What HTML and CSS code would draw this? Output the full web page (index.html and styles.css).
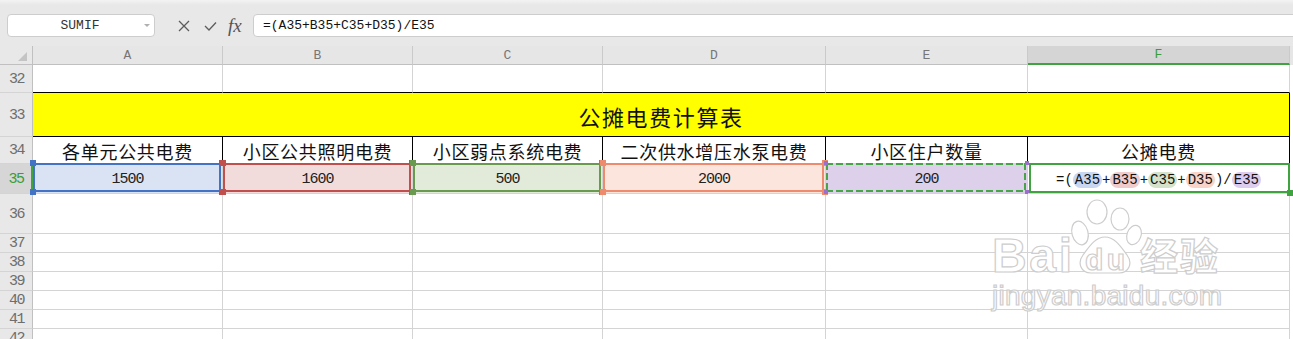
FILE: index.html
```html
<!DOCTYPE html>
<html lang="zh-CN">

<head>
  <meta charset="UTF-8">
  <meta name="viewport" content="width=device-width, initial-scale=1.0">
  <title>公摊电费计算表</title>
  <link rel="stylesheet" href="styles.css">
</head>

<body>
  <div id="app">
    <div class="top"></div>
    <div class="bar">
      <div class="name-box"><span class="name">SUMIF</span><span class="drop"></span></div>
      <div class="tools">
        <svg width="12" height="12" viewBox="0 0 12 12">
          <path d="M1 1L11 11M11 1L1 11" stroke="#5c5c5c" stroke-width="1.3" fill="none" />
        </svg>
        <svg class="ok" width="13" height="10" viewBox="0 0 13 10">
          <path d="M1 5L5 9L12 1.5" stroke="#5c5c5c" stroke-width="1.3" fill="none" />
        </svg>
        <span class="fx">fx</span>
      </div>
      <div class="input">=(A35+B35+C35+D35)/E35</div>
    </div>
    <div class="gap"></div>

    <div class="sheet">
      <div class="row head">
        <div class="rh corner"><span class="tri"></span></div>
        <div class="c ca">A</div>
        <div class="c cb">B</div>
        <div class="c cc">C</div>
        <div class="c cd">D</div>
        <div class="c ce">E</div>
        <div class="c cf on">F</div>
      </div>

      <div class="row r32">
        <div class="rh">32</div>
        <div class="c ca"></div>
        <div class="c cb"></div>
        <div class="c cc"></div>
        <div class="c cd"></div>
        <div class="c ce"></div>
        <div class="c cf"></div>
      </div>

      <div class="row r33">
        <div class="rh">33</div>
        <div class="c title">公摊电费计算表</div>
      </div>

      <div class="row r34">
        <div class="rh">34</div>
        <div class="c ca">各单元公共电费</div>
        <div class="c cb">小区公共照明电费</div>
        <div class="c cc">小区弱点系统电费</div>
        <div class="c cd">二次供水增压水泵电费</div>
        <div class="c ce">小区住户数量</div>
        <div class="c cf">公摊电费</div>
      </div>

      <div class="row r35">
        <div class="rh sel">35</div>
        <div class="c ca v blue">1500</div>
        <div class="c cb v red">1600</div>
        <div class="c cc v green">500</div>
        <div class="c cd v orange">2000</div>
        <div class="c ce v purple">200</div>
        <div class="c cf active">
          <span class="fm">=(<span class="p pa">A35</span>+<span class="p pb">B35</span>+<span class="p pc">C35</span>+<span class="p pd">D35</span>)/<span class="p pe">E35</span></span>
        </div>
      </div>

      <div class="row r36">
        <div class="rh">36</div>
        <div class="c ca"></div>
        <div class="c cb"></div>
        <div class="c cc"></div>
        <div class="c cd"></div>
        <div class="c ce"></div>
        <div class="c cf"></div>
      </div>
      <div class="row small">
        <div class="rh">37</div>
        <div class="c ca"></div>
        <div class="c cb"></div>
        <div class="c cc"></div>
        <div class="c cd"></div>
        <div class="c ce"></div>
        <div class="c cf"></div>
      </div>
      <div class="row small">
        <div class="rh">38</div>
        <div class="c ca"></div>
        <div class="c cb"></div>
        <div class="c cc"></div>
        <div class="c cd"></div>
        <div class="c ce"></div>
        <div class="c cf"></div>
      </div>
      <div class="row small">
        <div class="rh">39</div>
        <div class="c ca"></div>
        <div class="c cb"></div>
        <div class="c cc"></div>
        <div class="c cd"></div>
        <div class="c ce"></div>
        <div class="c cf"></div>
      </div>
      <div class="row small">
        <div class="rh">40</div>
        <div class="c ca"></div>
        <div class="c cb"></div>
        <div class="c cc"></div>
        <div class="c cd"></div>
        <div class="c ce"></div>
        <div class="c cf"></div>
      </div>
      <div class="row small">
        <div class="rh">41</div>
        <div class="c ca"></div>
        <div class="c cb"></div>
        <div class="c cc"></div>
        <div class="c cd"></div>
        <div class="c ce"></div>
        <div class="c cf"></div>
      </div>
      <div class="row small">
        <div class="rh">42</div>
        <div class="c ca"></div>
        <div class="c cb"></div>
        <div class="c cc"></div>
        <div class="c cd"></div>
        <div class="c ce"></div>
        <div class="c cf"></div>
      </div>
    </div>

    <!-- 水印 -->
    <svg class="mark" width="245" height="125" viewBox="0 0 245 125">
      <g fill="#fff" stroke="#cdcdcd" stroke-width="1.2">
        <text x="7" y="77" font-family="Liberation Sans" font-weight="bold" font-size="48" textLength="80">Bai</text>
        <ellipse cx="95" cy="38" rx="8" ry="12" transform="rotate(-15 95 38)" />
        <ellipse cx="112" cy="17" rx="10" ry="12" />
        <ellipse cx="135" cy="24" rx="9" ry="11" />
        <ellipse cx="149" cy="40" rx="7" ry="10" transform="rotate(20 149 40)" />
        <path d="M120 42C110 42 104 52 98 60C92 68 96 78 106 78L134 78C144 78 148 68 142 60C136 52 130 42 120 42Z" />
        <text x="100" y="75" font-family="Liberation Sans" font-weight="bold" font-size="30" textLength="40">du</text>
        <text x="155" y="75" font-family="Noto Sans CJK SC" font-weight="bold" font-size="38" textLength="78">经验</text>
        <text x="7" y="110" font-family="Liberation Sans" font-size="28" textLength="230">jingyan.baidu.com</text>
      </g>
    </svg>
  </div>
</body>

</html>
```

FILE: styles.css
```css
* {
  margin: 0;
  padding: 0;
  box-sizing: border-box;
}

body {
  width: 1293px;
  height: 339px;
  overflow: hidden;
  background: #e8e8e8;
  font-family: "Liberation Mono", monospace;
}

#app {
  position: relative;
}

.top {
  height: 14px;
  background: linear-gradient(#f3f3f3, #e8e8e8 5px);
}

/* 编辑栏 */
.bar {
  display: flex;
  align-items: center;
  height: 23px;
}

.name-box {
  display: flex;
  align-items: center;
  width: 148px;
  height: 23px;
  margin-left: 7px;
  background: #fff;
  border: 1px solid #cdcdcd;
  border-radius: 4px;
  color: #333;
  font-size: 13px;
}

.name {
  flex: 1;
  text-align: center;
  padding-left: 8px;
}

.drop {
  width: 0;
  height: 0;
  margin-right: 4px;
  border-left: 3px solid transparent;
  border-right: 3px solid transparent;
  border-top: 3px solid #b0b0b0;
}

.tools {
  display: flex;
  align-items: center;
  width: 98px;
  padding-left: 23px;
}

.ok {
  margin-left: 14px;
}

.fx {
  margin-left: 11px;
  font-family: "Liberation Serif", serif;
  font-style: italic;
  font-size: 19px;
  color: #555;
  line-height: 20px;
}

.input {
  flex: 1;
  height: 23px;
  margin-right: -6px;
  padding-left: 9px;
  background: #fff;
  border: 1px solid #cdcdcd;
  border-radius: 4px 0 0 4px;
  color: #111;
  font-size: 13px;
  line-height: 21px;
}

.gap {
  height: 9px;
}

/* 表格 */
.sheet {
  background: #fff;
}

.row {
  display: flex;
}

.c,
.rh {
  display: flex;
  align-items: center;
  justify-content: center;
  border-right: 1px solid #d4d4d4;
  border-bottom: 1px solid #d4d4d4;
  flex-shrink: 0;
}

.rh {
  width: 33px;
  padding: 1px 0 0 1px;
  background: #e8e8e8;
  border-right-color: #c0c0c0;
  color: #6e6e6e;
  font-size: 15px;
  letter-spacing: -1.5px;
}

.ca,
.cb,
.cc {
  width: 190px;
}

.cd {
  width: 223px;
}

.ce {
  width: 202px;
}

.cf {
  width: 262px;
}

.head {
  height: 19px;
  background: #e6e6e6;
}

.head .c,
.head .rh {
  border-bottom-color: #c0c0c0;
}

.head .c {
  border-right-color: #cacaca;
  color: #767676;
  font-size: 13px;
}

.head .on {
  background: #d5d5d5;
  color: #3a9c3a;
  border-bottom: 2px solid #3fa43f;
}

.corner {
  align-items: flex-end;
  justify-content: flex-end;
  padding: 0 5px 3px 0;
}

.tri {
  width: 0;
  height: 0;
  border-left: 9px solid transparent;
  border-bottom: 9px solid #c4c4c4;
}

.r32 {
  height: 28px;
}

.r32 .c {
  border-bottom-color: #000;
}

.r33 {
  height: 44px;
}

.title {
  width: 1257px;
  background: #ffff00;
  border-right-color: #000;
  border-bottom-color: #000;
  font-family: "Noto Sans CJK SC", sans-serif;
  font-size: 22px;
  letter-spacing: 1.6px;
  padding-top: 3px;
  color: #111;
}

.r34 {
  height: 27px;
}

.r34 .c {
  align-items: flex-end;
  border-right-color: #000;
  font-family: "Noto Sans CJK SC", sans-serif;
  font-size: 18px;
  line-height: 24px;
  letter-spacing: 0.7px;
  color: #111;
}

.r35 {
  height: 30px;
}

.r35 .c {
  padding-top: 2px;
}

.sel {
  background: #d6d6d6;
  color: #3a9c3a;
  border-right: 2px solid #3fa43f;
}

.v {
  position: relative;
  background: var(--f);
  color: #222;
  font-size: 15px;
  letter-spacing: -1px;
}

.v::before {
  content: "";
  position: absolute;
  top: -1px;
  left: 0;
  right: 1px;
  bottom: 1px;
  border: 2px solid var(--k);
}

.v::after {
  content: "";
  position: absolute;
  top: -4px;
  left: -3px;
  right: -3px;
  bottom: -2px;
  background:
    linear-gradient(var(--k), var(--k)) left top / 6px 6px no-repeat,
    linear-gradient(var(--k), var(--k)) right top / 6px 6px no-repeat,
    linear-gradient(var(--k), var(--k)) left bottom / 6px 6px no-repeat,
    linear-gradient(var(--k), var(--k)) right bottom / 6px 6px no-repeat;
}

.blue {
  --f: #dae3f3;
  --k: #4472c4;
}

.red {
  --f: #f2dcdb;
  --k: #c0504d;
}

.green {
  --f: #e2eada;
  --k: #6a9a4f;
}

.orange {
  --f: #fbe5dd;
  --k: #ee8a6e;
}

.purple {
  --f: #dcd0ea;
  --k: #9b70cc;
}

/* 复制时的虚线框 */
.purple::before {
  border: 0;
  background:
    repeating-linear-gradient(90deg, #47a447 0 7px, transparent 7px 10px) left top / 100% 2px no-repeat,
    repeating-linear-gradient(90deg, #47a447 0 7px, transparent 7px 10px) left bottom / 100% 2px no-repeat,
    repeating-linear-gradient(180deg, #47a447 0 7px, transparent 7px 10px) left top / 2px 100% no-repeat,
    repeating-linear-gradient(180deg, #47a447 0 7px, transparent 7px 10px) right top / 2px 100% no-repeat;
}

.purple::after {
  top: -3px;
  left: -2px;
  right: -2px;
  bottom: -1px;
  background:
    linear-gradient(var(--k), var(--k)) left top / 4px 4px no-repeat,
    linear-gradient(var(--k), var(--k)) right top / 4px 4px no-repeat,
    linear-gradient(var(--k), var(--k)) left bottom / 4px 4px no-repeat,
    linear-gradient(var(--k), var(--k)) right bottom / 4px 4px no-repeat;
}

.active {
  position: relative;
}

.active::before {
  content: "";
  position: absolute;
  top: -1px;
  left: 1px;
  right: -1px;
  bottom: 0;
  border: 2px solid #3fa43f;
}

.active::after {
  content: "";
  position: absolute;
  right: -4px;
  bottom: -3px;
  width: 6px;
  height: 6px;
  background: #3fa43f;
}

.fm {
  display: flex;
  align-items: center;
  font-size: 14px;
  color: #111;
}

.p {
  padding: 0 2px;
  border-radius: 8px;
  line-height: 16px;
}

.pa {
  background: #c9d6f0;
}

.pb {
  background: #efcccb;
}

.pc {
  background: #d3e2c8;
}

.pd {
  background: #f7d3c8;
}

.pe {
  background: #dccdee;
}

.r36 {
  height: 40px;
}

.small {
  height: 19px;
}

.mark {
  position: absolute;
  left: 985px;
  top: 195px;
  pointer-events: none;
}
```
